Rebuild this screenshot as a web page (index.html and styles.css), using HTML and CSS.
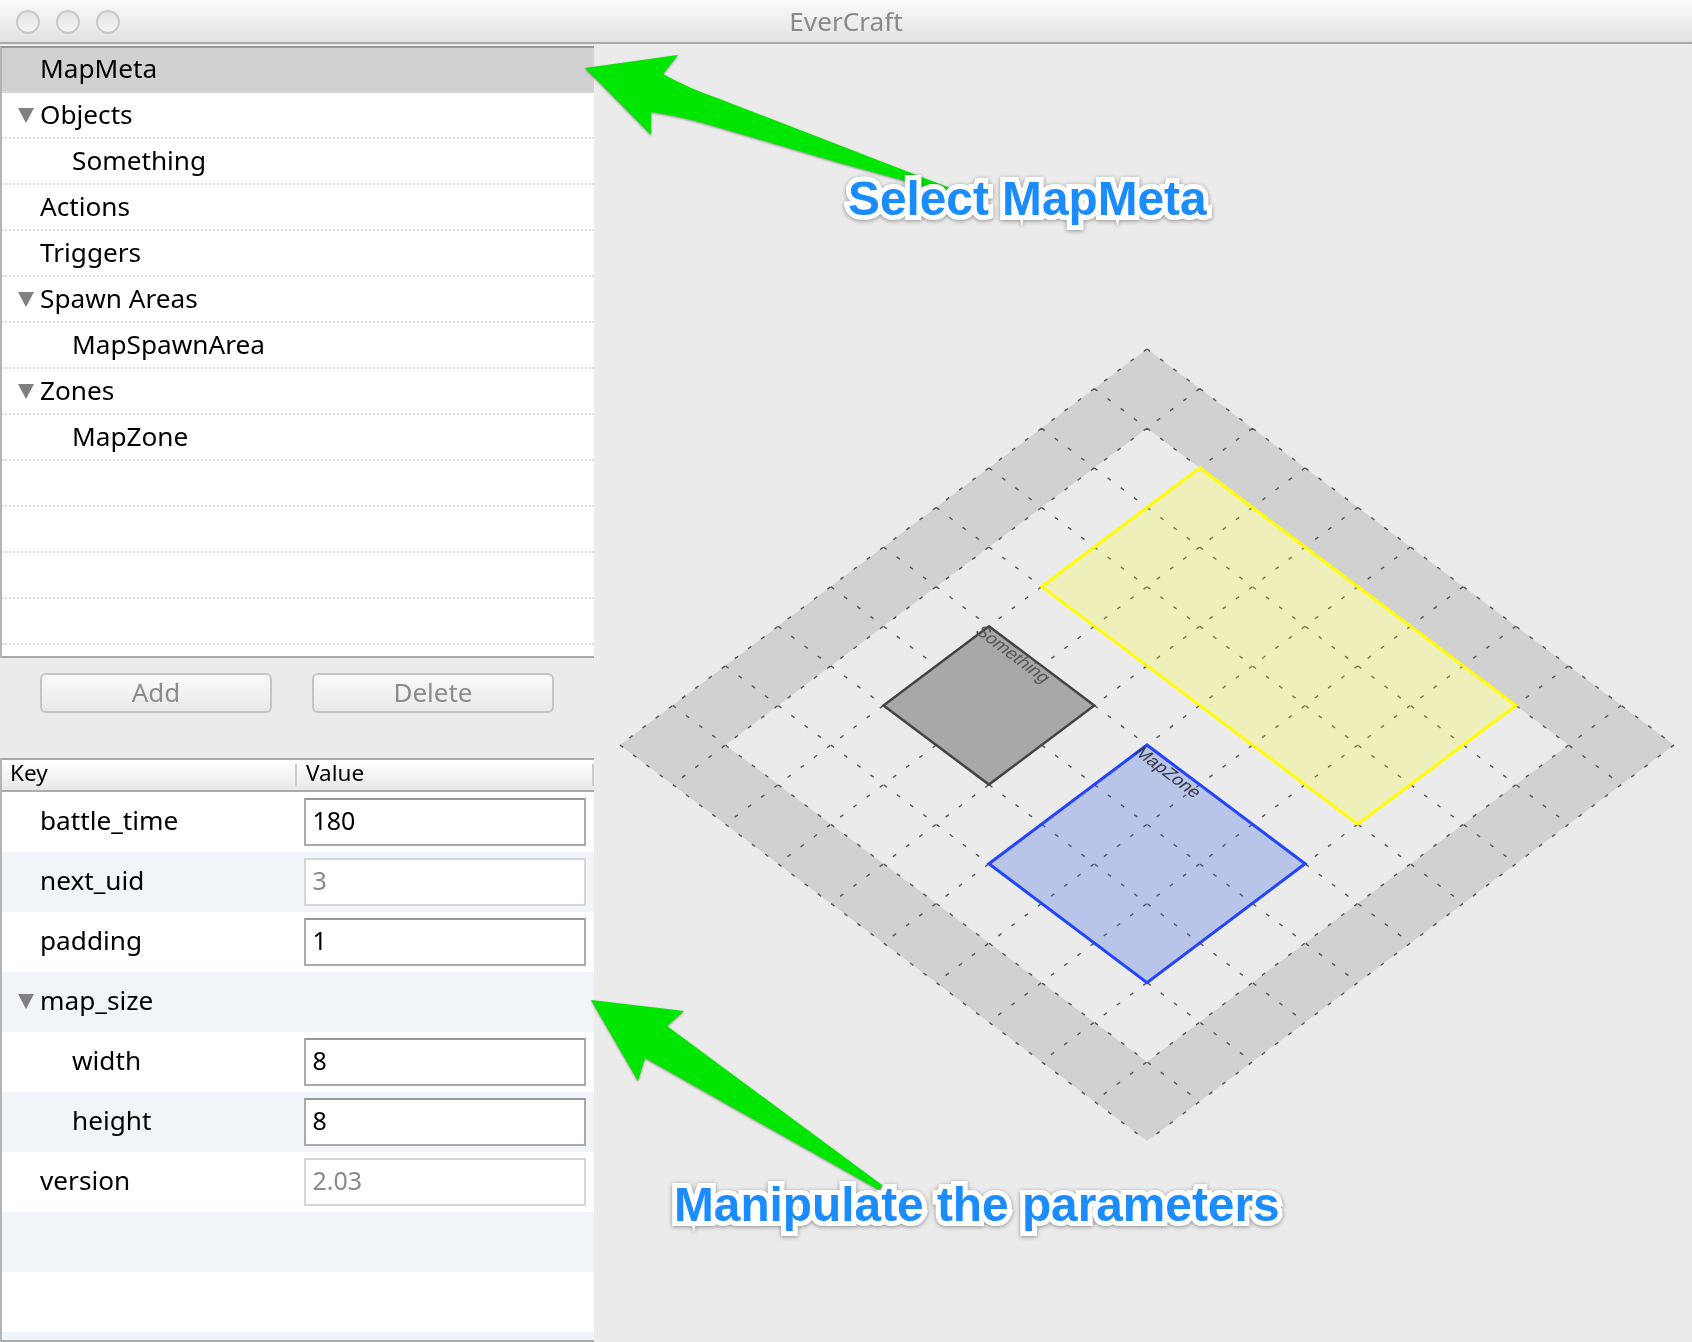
FILE: index.html
```html
<!DOCTYPE html>
<html lang="en">
<head>
    <meta charset="UTF-8">
    <title>EverCraft</title>
    <link rel="stylesheet" href="styles.css">
</head>
<body>

    <div id="window">
        <header id="titlebar">
            <div class="lights">
                <span class="light"></span>
                <span class="light"></span>
                <span class="light"></span>
            </div>
            <div class="title">EverCraft</div>
        </header>

        <div id="main">
            <aside id="sidebar">
                <div id="tree">
                    <div class="tree-row selected"><span class="twisty-space"></span>MapMeta</div>
                    <div class="tree-row"><span class="twisty"></span>Objects</div>
                    <div class="tree-row child"><span class="twisty-space"></span>Something</div>
                    <div class="tree-row"><span class="twisty-space"></span>Actions</div>
                    <div class="tree-row"><span class="twisty-space"></span>Triggers</div>
                    <div class="tree-row"><span class="twisty"></span>Spawn Areas</div>
                    <div class="tree-row child"><span class="twisty-space"></span>MapSpawnArea</div>
                    <div class="tree-row"><span class="twisty"></span>Zones</div>
                    <div class="tree-row child"><span class="twisty-space"></span>MapZone</div>
                    <div class="tree-row"></div>
                    <div class="tree-row"></div>
                    <div class="tree-row"></div>
                    <div class="tree-row"></div>
                </div>

                <div id="actions">
                    <button class="btn btn-add" disabled>Add</button>
                    <button class="btn btn-delete" disabled>Delete</button>
                </div>

                <div id="props">
                    <div class="props-head">
                        <div class="head-cell head-key">Key</div>
                        <div class="head-cell head-value">Value</div>
                    </div>
                    <div class="prop-row">
                        <div class="key"><span class="twisty-space"></span>battle_time</div>
                        <div class="field">180</div>
                    </div>
                    <div class="prop-row stripe">
                        <div class="key"><span class="twisty-space"></span>next_uid</div>
                        <div class="field readonly">3</div>
                    </div>
                    <div class="prop-row">
                        <div class="key"><span class="twisty-space"></span>padding</div>
                        <div class="field">1</div>
                    </div>
                    <div class="prop-row stripe">
                        <div class="key"><span class="twisty"></span>map_size</div>
                    </div>
                    <div class="prop-row">
                        <div class="key child"><span class="twisty-space"></span>width</div>
                        <div class="field">8</div>
                    </div>
                    <div class="prop-row stripe">
                        <div class="key child"><span class="twisty-space"></span>height</div>
                        <div class="field">8</div>
                    </div>
                    <div class="prop-row">
                        <div class="key"><span class="twisty-space"></span>version</div>
                        <div class="field readonly">2.03</div>
                    </div>
                    <div class="prop-row stripe"></div>
                    <div class="prop-row"></div>
                    <div class="prop-row stripe"></div>
                </div>
            </aside>

            <section id="canvas">
                <!-- viewBox uses window coordinates -->
                <svg id="map" viewBox="594 44 1098 1298">
                    <g transform="matrix(52.7 39.6 -52.7 39.6 1147 349)">
                        <path class="padding-band" fill-rule="evenodd" d="M0 0H10V10H0Z M1 1H9V9H1Z"/>
                        <path class="grid" d="M0 0V10M1 0V10M2 0V10M3 0V10M4 0V10M5 0V10M6 0V10M7 0V10M8 0V10M9 0V10M10 0V10
                                              M0 0H10M0 1H10M0 2H10M0 3H10M0 4H10M0 5H10M0 6H10M0 7H10M0 8H10M0 9H10M0 10H10"/>
                        <rect class="zone-grey" x="2" y="5" width="2" height="2"/>
                        <rect class="zone-yellow" x="2" y="1" width="6" height="3"/>
                        <rect class="zone-blue" x="5" y="5" width="3" height="3"/>
                    </g>
                    <text class="zone-label" transform="matrix(.8 .6 -.8 .6 974 632)">Something</text>
                    <text class="zone-label label-blue" transform="matrix(.8 .6 -.8 .6 1133 753)">MapZone</text>
                </svg>
            </section>
        </div>

        <svg id="arrows" viewBox="0 0 1692 1342">
            <path d="M585 68 L678 55 L663 74 Q690 89 717 98 L950 188 L960 196 L840 163 L717 127 Q680 116 651 112 L651 135 Z"/>
            <path d="M591 1000 L684 1011 L667 1026 L882 1185 L879 1190 L645 1058 L638 1081 Z"/>
        </svg>

        <div class="callout callout-select">Select MapMeta</div>
        <div class="callout callout-params">Manipulate the parameters</div>
    </div>

</body>
</html>
```

FILE: styles.css
```css
* {
    box-sizing: border-box;
}

body {
    margin: 0;
    background-color: #ebebeb;
    font-family: "Noto Sans", Arial, sans-serif;
    font-size: 26.2px;
    color: #000;
    overflow: hidden;
}

#window {
    position: relative;
    width: 1692px;
    height: 1342px;
    overflow: hidden;
}

/* the capture behind the annotations is slightly soft */
#titlebar,
#main {
    filter: blur(0.5px);
}

#titlebar {
    position: relative;
    height: 44px;
    background: linear-gradient(#fafafa, #e2e2e2);
    border-bottom: 2px solid #aaa;
}

.lights {
    display: flex;
    gap: 16px;
    padding: 10px 0 0 16px;
}

.light {
    width: 24px;
    height: 24px;
    border: 2px solid #c8c8c8;
    border-radius: 50%;
    background: linear-gradient(#e4e4e4, #f4f4f4);
}

.title {
    position: absolute;
    top: 0;
    left: 0;
    right: 0;
    line-height: 43px;
    text-align: center;
    color: #8a8a8a;
}

#main {
    display: flex;
    height: 1298px;
}

#sidebar {
    width: 594px;
    flex-shrink: 0;
    padding-top: 2px;
}

#canvas {
    flex: 1;
}

#map {
    display: block;
    width: 100%;
    height: 100%;
}

/* tree */
#tree {
    height: 612px;
    background-color: #fff;
    border-top: 2px solid #999;
    border-left: 2px solid #b4b4b4;
    border-bottom: 2px solid #aaa;
}

.tree-row {
    display: flex;
    align-items: center;
    height: 46px;
    padding-bottom: 2px;
    border-bottom: 2px dotted #dedede;
}

.tree-row.selected {
    height: 45px;
    padding-bottom: 4px;
    background-color: #d1d1d1;
}

.tree-row.child {
    padding-left: 32px;
}

.twisty-space {
    width: 38px;
    flex-shrink: 0;
}

.twisty {
    width: 0;
    height: 0;
    margin: 2px 6px 0 16px;
    flex-shrink: 0;
    border-left: 8.5px solid transparent;
    border-right: 8.5px solid transparent;
    border-top: 15px solid #808080;
}

/* add / delete */
#actions {
    display: flex;
    gap: 40px;
    height: 100px;
    padding: 15px 0 0 40px;
}

.btn {
    height: 40px;
    padding: 0 0 2px;
    font-family: inherit;
    font-size: 26px;
    line-height: 1;
    color: #8c8c8c;
    background: linear-gradient(#fafafa, #e9e9e9);
    border: 2px solid #c4c4c4;
    border-radius: 6px;
}

.btn-add {
    width: 232px;
}

.btn-delete {
    width: 242px;
}

/* key / value table */
#props {
    height: 584px;
    background-color: #fff;
    border-top: 2px solid #aaa;
    border-left: 2px solid #b4b4b4;
    border-bottom: 2px solid #aaa;
    overflow: hidden;
}

.props-head {
    display: flex;
    align-items: center;
    height: 32px;
    font-size: 22.5px;
    background: linear-gradient(#fff, #e8e8e8);
    border-bottom: 2px solid #aaa;
}

.head-cell {
    height: 22px;
    line-height: 18px;
}

.head-key {
    width: 295px;
    padding-left: 8px;
    border-right: 2px solid #ccc;
}

.head-value {
    flex: 1;
    padding-left: 9px;
    border-right: 2px solid #ccc;
}

.prop-row {
    display: flex;
    align-items: center;
    height: 60px;
}

.stripe {
    background-color: #f1f4f9;
}

.key {
    display: flex;
    align-items: center;
    width: 301.5px;
    padding-bottom: 4px;
}

.key.child {
    padding-left: 32px;
}

.field {
    width: 282px;
    height: 48px;
    padding-left: 7px;
    font-size: 25px;
    line-height: 40px;
    background-color: #fff;
    border: 2px solid #aaa;
    border-top-color: #999;
}

.field.readonly {
    color: #8a8a8a;
    border-color: #d6d6d6;
}

/* map shapes */
.padding-band {
    fill: #d1d1d1;
}

.grid {
    fill: none;
    stroke: #555;
    stroke-width: 1.4;
    stroke-dasharray: 4 12.5;
    vector-effect: non-scaling-stroke;
}

.zone-grey {
    fill: #a8a8a8;
    stroke: #444;
    stroke-width: 2.5;
    vector-effect: non-scaling-stroke;
}

.zone-yellow {
    fill: #ffff00;
    fill-opacity: 0.2;
    stroke: #ffff00;
    stroke-width: 3;
    vector-effect: non-scaling-stroke;
}

.zone-blue {
    fill: #1f55e0;
    fill-opacity: 0.25;
    stroke: #2244ff;
    stroke-width: 3;
    vector-effect: non-scaling-stroke;
}

.zone-label {
    font-family: "Liberation Sans", Arial, sans-serif;
    font-size: 18px;
    fill: #555;
}

.label-blue {
    fill: #334;
}

/* annotations on top of the window */
#arrows {
    position: absolute;
    top: 0;
    left: 0;
    width: 1692px;
    height: 1342px;
    fill: #00e600;
    filter: drop-shadow(0 1px 1px rgba(0, 0, 0, 0.4));
    pointer-events: none;
}

.callout {
    position: absolute;
    font-family: "Liberation Sans", Arial, sans-serif;
    font-size: 47.8px;
    font-weight: bold;
    line-height: 56px;
    white-space: nowrap;
    color: #1a8cff;
    -webkit-text-stroke: 10px #fff;
    paint-order: stroke fill;
    filter: drop-shadow(0 1px 2px rgba(0, 0, 0, 0.4));
}

.callout-select {
    top: 171px;
    left: 848px;
}

.callout-params {
    top: 1177px;
    left: 674px;
}
```
